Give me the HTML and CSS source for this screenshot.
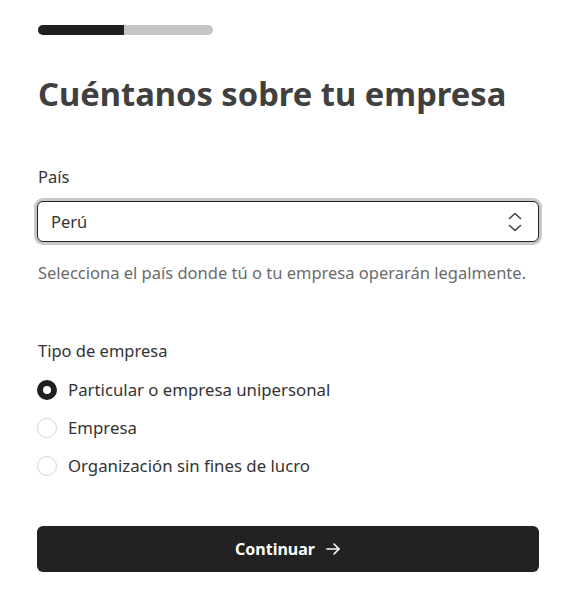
FILE: index.html
```html
<!DOCTYPE html>
<html lang="es">
<head>
    <meta charset="UTF-8">
    <meta name="viewport" content="width=device-width, initial-scale=1.0">
    <title>Cuéntanos sobre tu empresa</title>
    <link rel="stylesheet" href="styles.css">
</head>
<body>
    <div class="page">
        <div class="progress">
            <div class="progress-fill"></div>
        </div>

        <h1 class="title">Cuéntanos sobre tu empresa</h1>

        <div class="field">
            <label class="field-label" for="pais">País</label>
            <div class="select-wrap">
                <select class="select" id="pais">
                    <option>Perú</option>
                </select>
                <svg class="select-icon" width="16" height="24" viewBox="0 0 16 24" fill="none" stroke="currentColor" stroke-width="1.6" stroke-linecap="round" stroke-linejoin="round">
                    <polyline points="2.5,8.5 8,3.5 13.5,8.5"></polyline>
                    <polyline points="2.5,15.5 8,20.5 13.5,15.5"></polyline>
                </svg>
            </div>
            <div class="field-help">Selecciona el país donde tú o tu empresa operarán legalmente.</div>
        </div>

        <div class="field field-radios">
            <div class="field-label">Tipo de empresa</div>
            <label class="radio">
                <input type="radio" name="tipo" checked>
                <span class="radio-dot"></span>
                Particular o empresa unipersonal
            </label>
            <label class="radio">
                <input type="radio" name="tipo">
                <span class="radio-dot"></span>
                Empresa
            </label>
            <label class="radio">
                <input type="radio" name="tipo">
                <span class="radio-dot"></span>
                Organización sin fines de lucro
            </label>
        </div>

        <button type="button" class="submit-button">
            Continuar
            <svg width="16" height="16" viewBox="0 0 16 16" fill="none" stroke="currentColor" stroke-width="1.6" stroke-linecap="round" stroke-linejoin="round">
                <line x1="2" y1="8" x2="14" y2="8"></line>
                <polyline points="9,3 14,8 9,13"></polyline>
            </svg>
        </button>
    </div>
</body>
</html>
```

FILE: styles.css
```css
body {
    margin: 0;
    background-color: white;
    font-family: "Noto Sans", "Open Sans", sans-serif;
    color: #333333;
}

.page {
    padding: 25px 30px 0 37px;
}

.progress {
    width: 175px;
    height: 10px;
    margin-left: 1px;
    border-radius: 5px;
    background-color: #c4c4c4;
    overflow: hidden;
}

.progress-fill {
    width: 86px;
    height: 100%;
    background-color: #1f1f1f;
}

.title {
    margin: 39px 0 0 1px;
    font-size: 32.7px;
    line-height: 40px;
    font-weight: 700;
    color: #404040;
}

.field {
    margin-top: 51px;
}

.field-label {
    display: block;
    font-size: 16.5px;
    line-height: 24px;
    margin-left: 1px;
    color: #333333;
}

.select-wrap {
    position: relative;
    margin-top: 12px;
}

.select {
    width: 100%;
    height: 41px;
    box-sizing: border-box;
    padding: 0 40px 0 13px;
    border: 1px solid #222222;
    border-radius: 6px;
    box-shadow: 0 0 0 3px #c8c8c8;
    background-color: white;
    font-family: inherit;
    font-size: 16.5px;
    color: #333333;
    appearance: none;
    outline: none;
}

.select-icon {
    position: absolute;
    right: 16px;
    top: 9px;
    color: #444444;
    pointer-events: none;
}

.field-help {
    margin-top: 19px;
    margin-left: 1px;
    font-size: 16.5px;
    line-height: 24px;
    color: #6b6b6b;
}

.field-radios {
    margin-top: 54px;
    display: flex;
    flex-direction: column;
    gap: 14px;
}

.field-radios .field-label {
    margin-bottom: 1px;
}

.radio {
    display: flex;
    align-items: center;
    gap: 11px;
    font-size: 16.8px;
    line-height: 24px;
    color: #333333;
    cursor: pointer;
}

.radio input {
    display: none;
}

.radio-dot {
    width: 20px;
    height: 20px;
    box-sizing: border-box;
    border: 1px solid #d4d4d4;
    border-radius: 50%;
    background-color: white;
}

.radio input:checked + .radio-dot {
    border: 6px solid #1f1f1f;
}

.submit-button {
    width: 100%;
    height: 46px;
    margin-top: 48px;
    background-color: #222222;
    color: white;
    border: none;
    border-radius: 6px;
    display: flex;
    align-items: center;
    justify-content: center;
    gap: 10px;
    font-family: inherit;
    font-size: 16px;
    font-weight: 700;
    cursor: pointer;
}
```
